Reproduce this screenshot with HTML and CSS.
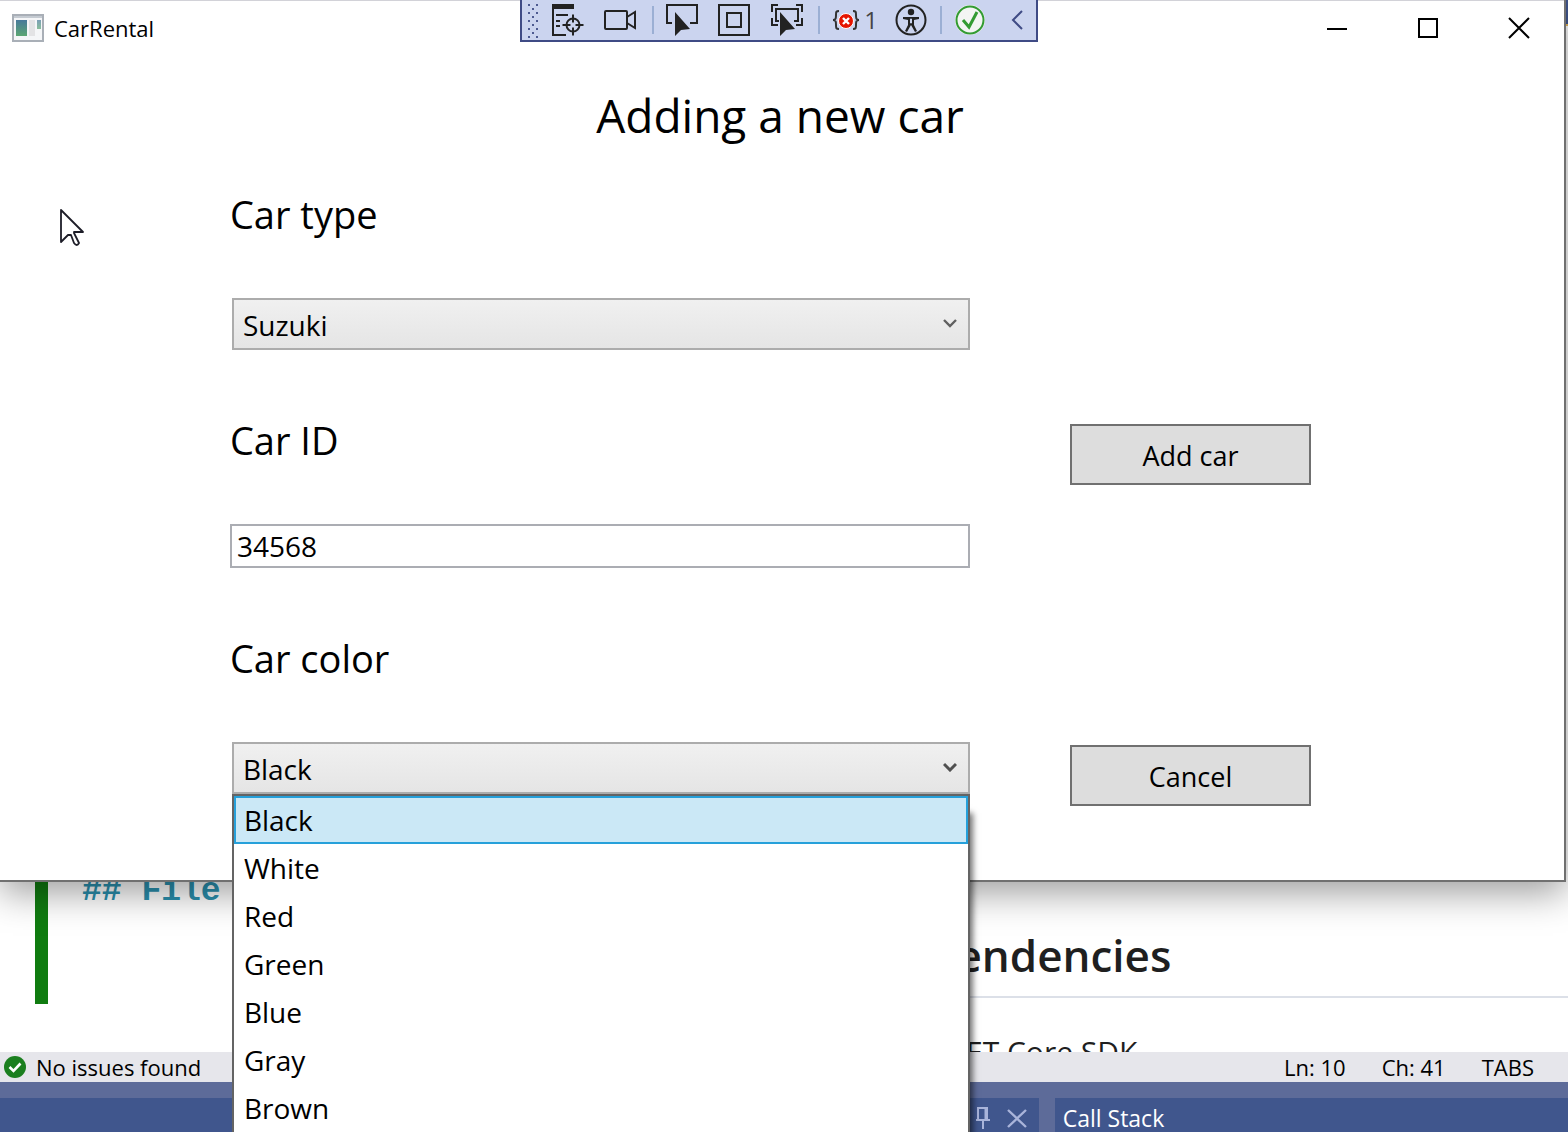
FILE: index.html
```html
<!DOCTYPE html>
<html lang="en">
<head>
<meta charset="utf-8">
<meta name="viewport" content="width=device-width, initial-scale=1">
<title>CarRental</title>
<link rel="stylesheet" href="styles.css">
</head>
<body>
<div class="ide">
  <div class="ide-header"></div>
  <div class="documents">
    <div class="editor">
      <div class="change-bar"></div>
      <code class="code-line">## File</code>
    </div>
    <div class="preview">
      <h2 class="preview-heading">Dependencies</h2>
      <p class="preview-text">.NET Core SDK</p>
    </div>
  </div>
  <div class="status-bar">
    <svg class="status-icon" viewBox="0 0 22 22" aria-hidden="true"><circle cx="11" cy="11" r="11" fill="#1b7f1f"/><path d="M5.500 11l4 4 7-7.500" fill="none" stroke="#fff" stroke-width="2.600"/></svg>
    <span class="status-issues">No issues found</span>
    <span>Ln: 10</span>
    <span>Ch: 41</span>
    <span>TABS</span>
  </div>
  <div class="tool-windows">
    <div class="tool-window tool-window-left">
      <button class="tool-button" type="button" aria-label="Pin"><svg viewBox="0 0 20 24" width="20" height="24" fill="none" stroke="#a9b4da" stroke-width="2"><path d="M5 14V2h9v12M3 14h14M10 14v9"/><path d="M13 2v12" stroke-width="3"/></svg></button>
      <button class="tool-button" type="button" aria-label="Close"><svg viewBox="0 0 20 24" width="20" height="24" fill="none" stroke="#a9b4da" stroke-width="2.400"><path d="M1 4l18 17M19 4L1 21"/></svg></button>
    </div>
    <div class="tool-window"><span class="tool-title">Call Stack</span></div>
  </div>
</div>

<main class="window">
  <header class="title-bar">
    <svg class="app-icon" viewBox="0 0 32 28" aria-hidden="true">
      <defs><linearGradient id="pane" x1="0" y1="0" x2="0" y2="1"><stop offset="0" stop-color="#47799b"/><stop offset="1" stop-color="#5ba673"/></linearGradient></defs>
      <rect x="1" y="1" width="30" height="26" fill="#f5f6f8" stroke="#a9afb7" stroke-width="2"/>
      <path d="M2 3h28" stroke="#c5cbd2" stroke-width="2"/>
      <rect x="4" y="6" width="11" height="16" fill="url(#pane)"/>
      <rect x="17" y="6" width="6" height="16" fill="#e3e3e5"/>
      <rect x="25" y="6" width="4" height="9" fill="url(#pane)" opacity=".7"/>
    </svg>
    <span class="app-name">CarRental</span>
    <button class="caption-button" type="button" aria-label="Minimize"><svg viewBox="0 0 22 22" width="22" height="22"><path d="M1 12h20" stroke="#000" stroke-width="2"/></svg></button>
    <button class="caption-button" type="button" aria-label="Maximize"><svg viewBox="0 0 22 22" width="22" height="22"><rect x="2" y="2" width="18" height="18" fill="none" stroke="#000" stroke-width="2"/></svg></button>
    <button class="caption-button" type="button" aria-label="Close"><svg viewBox="0 0 22 22" width="22" height="22"><path d="M1 1l20 20M21 1L1 21" stroke="#000" stroke-width="2"/></svg></button>
  </header>
  <h1 class="page-title">Adding a new car</h1>
  <form class="form">
    <div class="fields">
      <div class="field">
        <label class="field-label" for="type">Car type</label>
        <div class="combo">
          <select class="combo-select" id="type"><option>Suzuki</option></select>
          <svg class="combo-arrow" viewBox="0 0 14 10"><path d="M1 2l6 6 6-6" fill="none" stroke="#606060" stroke-width="2.400"/></svg>
        </div>
      </div>
      <div class="field">
        <label class="field-label" for="car-id">Car ID</label>
        <input class="text-box" id="car-id" type="text" value="34568">
      </div>
      <div class="field">
        <label class="field-label" for="color">Car color</label>
        <div class="combo">
          <select class="combo-select" id="color"><option>Black</option><option>White</option><option>Red</option><option>Green</option><option>Blue</option><option>Gray</option><option>Brown</option></select>
          <svg class="combo-arrow" viewBox="0 0 14 10"><path d="M1 2l6 6 6-6" fill="none" stroke="#505050" stroke-width="3"/></svg>
          <ul class="combo-list" role="listbox" aria-label="Car color">
            <li class="combo-item combo-item-active" role="option" aria-selected="true">Black</li>
            <li class="combo-item" role="option">White</li>
            <li class="combo-item" role="option">Red</li>
            <li class="combo-item" role="option">Green</li>
            <li class="combo-item" role="option">Blue</li>
            <li class="combo-item" role="option">Gray</li>
            <li class="combo-item" role="option">Brown</li>
          </ul>
        </div>
      </div>
    </div>
    <div class="actions">
      <button class="action" type="button">Add car</button>
      <button class="action" type="button">Cancel</button>
    </div>
  </form>
</main>

<div class="debug-bar">
  <svg class="grip" viewBox="0 0 12 36" aria-hidden="true"><defs><pattern id="dots" width="8" height="8" patternUnits="userSpaceOnUse"><rect x="1" y="2" width="2" height="2" fill="#4d5a91"/><rect x="5" y="6" width="2" height="2" fill="#4d5a91"/></pattern></defs><rect width="12" height="36" fill="url(#dots)"/></svg>
  <button class="debug-button" type="button" aria-label="Live Visual Tree"><svg viewBox="0 0 34 34" width="34" height="34" fill="none" stroke="#222" stroke-width="2"><path d="M1 1h22v5H1z" fill="#222" stroke="none"/><path d="M2 3v29h13M5 12h12M5 18h4M5 23h4"/><circle cx="22" cy="22" r="6.500"/><path d="M22 11.500v8M22 24.500v8M11.500 22h8M24.500 22h8"/></svg></button>
  <button class="debug-button" type="button" aria-label="Record"><svg viewBox="0 0 34 34" width="34" height="34" fill="none" stroke="#222" stroke-width="2"><rect x="2" y="8" width="22" height="18" rx="1"/><path d="M24 14l8-5v16l-8-5"/></svg></button>
  <span class="divider"></span>
  <button class="debug-button" type="button" aria-label="Select Element"><svg viewBox="0 0 34 34" width="34" height="34" fill="none" stroke="#222" stroke-width="2"><path d="M7 20H2V2h30v18h-7"/><path d="M10 9v24l6-6 9-1z" fill="#222" stroke="none"/></svg></button>
  <button class="debug-button" type="button" aria-label="Display Layout Adorners"><svg viewBox="0 0 34 34" width="34" height="34" fill="none" stroke="#222" stroke-width="2"><rect x="2" y="2" width="30" height="30"/><rect x="10" y="10" width="14" height="14"/></svg></button>
  <button class="debug-button" type="button" aria-label="Track Focused Element"><svg viewBox="0 0 34 34" width="34" height="34" fill="none" stroke="#222" stroke-width="2"><path d="M2 9V2h6M26 2h6v7M2 15v7h6M32 15v7h-6M9 18H6V6h22v12h-4"/><path d="M10 9v24l6-6 9-1z" fill="#222" stroke="none"/></svg></button>
  <span class="divider"></span>
  <button class="debug-button" type="button" aria-label="Binding failures"><svg viewBox="0 0 28 34" width="28" height="34" fill="none" stroke="#333" stroke-width="2"><path d="M7 8c-3 0-3 1-3 4s0 5-3 5c3 0 3 2 3 5s0 4 3 4M21 8c3 0 3 1 3 4s0 5 3 5c-3 0-3 2-3 5s0 4-3 4"/><circle cx="14" cy="18" r="7.500" fill="#e51400" stroke="#fff" stroke-width="1"/><path d="M11 15l6 6M17 15l-6 6" stroke="#fff" stroke-width="2.400"/></svg><span class="count">1</span></button>
  <button class="debug-button" type="button" aria-label="Accessibility checker"><svg viewBox="0 0 34 34" width="34" height="34" fill="none" stroke="#222" stroke-width="2"><circle cx="17" cy="17" r="14.500"/><circle cx="17" cy="9" r="3.200" fill="#222" stroke="none"/><path d="M9 14h16v2l-5 1v5l3 6-2 1-4-7-4 7-2-1 3-6v-5l-5-1z" fill="#222" stroke="none"/><path d="M16.500 16v4h1v-4z" stroke="#cbd4ef" stroke-width="1"/></svg></button>
  <span class="divider"></span>
  <button class="debug-button" type="button" aria-label="Hot Reload"><svg viewBox="0 0 34 34" width="34" height="34" fill="none"><circle cx="17" cy="17" r="15" fill="#f3f5f3"/><circle cx="17" cy="17" r="13.500" stroke="#339b33" stroke-width="2"/><path d="M10 17l6 7 8-15" stroke="#339b33" stroke-width="3"/></svg></button>
  <button class="debug-button" type="button" aria-label="Collapse"><svg viewBox="0 0 14 22" width="14" height="22"><path d="M13 2L4 11l9 9" fill="none" stroke="#3f4b85" stroke-width="2"/></svg></button>
</div>

<svg class="pointer" viewBox="0 0 26 40" aria-hidden="true"><path d="M1 2v32l7-7 3 0 3 8q3 4 5 0l-5-10 0-1h9z" fill="#fff" stroke="#1d1d28" stroke-width="1.800" stroke-linejoin="round"/></svg>
</body>
</html>
```
FILE: styles.css
```css
* {
  box-sizing: border-box;
}

body {
  position: relative;
  min-height: 100vh;
  margin: 0;
  overflow: hidden;
  font-family: "Open Sans", "Noto Sans", sans-serif;
  font-size: 28px;
  color: #000;
}

button,
input,
select {
  font-family: inherit;
  color: inherit;
}

button {
  padding: 0;
  border: 0;
  background: none;
}

/* IDE behind the application */
.ide {
  display: flex;
  flex-direction: column;
  height: 100vh;
  background: #5d6b99;
}

.ide-header {
  height: 26px;
  background: #40568d;
  border-bottom: 2px solid #e0b25a;
}

.documents {
  display: flex;
  flex: 1;
  min-height: 0;
  overflow: hidden;
  background: #fff;
}

.editor {
  display: flex;
  flex: 1;
  align-items: flex-end;
  gap: 34px;
  padding: 0 0 48px 35px;
}

.change-bar {
  width: 13px;
  height: 300px;
  background: #107c10;
}

.code-line {
  padding-bottom: 92px;
  font: bold 33px/40px "Liberation Mono", monospace;
  color: #2b91af;
}

.preview {
  display: flex;
  flex: 1;
  flex-direction: column;
  justify-content: flex-end;
  height: calc(100% + 20px);
  padding-left: 140px;
}

.preview-heading {
  margin: 0;
  padding-bottom: 11px;
  border-bottom: 2px solid #dce0e8;
  font-size: 44px;
  font-weight: 600;
  line-height: 60px;
  color: #1f1f1f;
}

.preview-text {
  margin: 34px 0 0;
  padding-left: 64px;
  font-size: 30px;
  line-height: 40px;
  color: #1f1f1f;
}

.status-bar {
  display: flex;
  align-items: center;
  gap: 36px;
  height: 30px;
  padding: 0 34px 0 4px;
  background: #e6e6eb;
  font-size: 22px;
  line-height: 30px;
}

.status-icon {
  width: 22px;
  height: 22px;
  margin-right: -26px;
}

.status-issues {
  flex: 1;
}

.tool-windows {
  display: flex;
  gap: 16px;
  height: 50px;
  padding-top: 16px;
}

.tool-window {
  display: flex;
  flex: 514;
  align-items: center;
  background: #40568d;
  color: #fff;
}

.tool-window-left {
  flex: 1028;
  justify-content: flex-end;
  gap: 14px;
  padding: 6px 12px 0 0;
}

.tool-button {
  display: flex;
}

.tool-title {
  padding: 6px 0 0 8px;
  font-size: 23px;
  line-height: 34px;
}

/* Application window */
.window {
  position: absolute;
  top: 0;
  left: 0;
  right: 2px;
  padding-bottom: 74px;
  background: #fff;
  border: solid #707070;
  border-width: 0 2px 2px 0;
  box-shadow: 0 10px 36px rgba(0, 0, 0, .4);
}

.title-bar {
  display: flex;
  align-items: center;
  height: 55px;
  padding-left: 12px;
  border-top: 1px solid #d2d2d8;
}

.app-icon {
  width: 32px;
  height: 28px;
  margin-right: 10px;
}

.app-name {
  flex: 1;
  font-size: 22px;
  line-height: 30px;
}

.caption-button {
  display: flex;
  align-items: center;
  justify-content: center;
  width: 91px;
  height: 100%;
}

.page-title {
  margin: 30px 4px 0 0;
  font-size: 46px;
  font-weight: 400;
  line-height: 60px;
  text-align: center;
}

.form {
  display: grid;
  grid-template-columns: 740fr 240fr;
  column-gap: 100px;
  margin-top: 40px;
  padding: 0 16.200% 0 14.700%;
}

.fields {
  display: flex;
  flex-direction: column;
  gap: 61px;
}

.field {
  display: flex;
  flex-direction: column;
  gap: 55px;
}

.field-label {
  font-size: 38px;
  line-height: 58px;
}

.combo {
  position: relative;
  margin-left: 2px;
}

.combo-select {
  display: block;
  width: 100%;
  height: 52px;
  padding: 1px 9px 0;
  appearance: none;
  border: 2px solid #acacac;
  border-radius: 0;
  background: linear-gradient(#f0f0f0, #e5e5e5);
  font-size: 28px;
}

.combo-arrow {
  position: absolute;
  top: 20px;
  right: 13px;
  width: 14px;
  height: 10px;
}

.combo-list {
  position: absolute;
  top: 100%;
  left: 0;
  right: 0;
  z-index: 2;
  margin: 0;
  padding: 0;
  list-style: none;
  background: #fff;
  border: 2px solid #646464;
  box-shadow: 6px 16px 6px -3px rgba(0, 0, 0, .55);
}

.combo-item {
  height: 48px;
  padding-left: 10px;
  line-height: 48px;
}

.combo-item-active {
  padding-left: 8px;
  border: 2px solid #26a0da;
  background: #cbe8f6;
  line-height: 44px;
}

.text-box {
  width: 100%;
  height: 44px;
  padding: 0 5px;
  border: 2px solid #abadb3;
  border-radius: 0;
  font-size: 28px;
}

.actions {
  display: flex;
  flex-direction: column;
  gap: 260px;
  padding-top: 239px;
}

.action {
  height: 61px;
  padding-top: 1px;
  border: 2px solid #707070;
  background: #ddd;
  font-size: 27px;
}

/* In-app debugging toolbar */
.debug-bar {
  position: absolute;
  top: 0;
  left: 0;
  right: 10px;
  display: grid;
  grid-template-columns: 22px 48px 56px 10px 48px 56px 50px 14px 58px 54px 6px 52px 1fr;
  place-items: center;
  width: 518px;
  height: 42px;
  margin: 0 auto;
  background: #cbd4ef;
  border: solid #3f4b85;
  border-width: 0 2px 2px;
}

.grip {
  width: 12px;
  height: 36px;
}

.debug-button {
  display: flex;
  align-items: center;
  gap: 4px;
}

.divider {
  width: 2px;
  height: 28px;
  background: #9bafd4;
}

.count {
  font-size: 24px;
  line-height: 30px;
  color: #444;
}

.pointer {
  position: absolute;
  top: 208px;
  left: 60px;
  width: 26px;
  height: 40px;
}
```
